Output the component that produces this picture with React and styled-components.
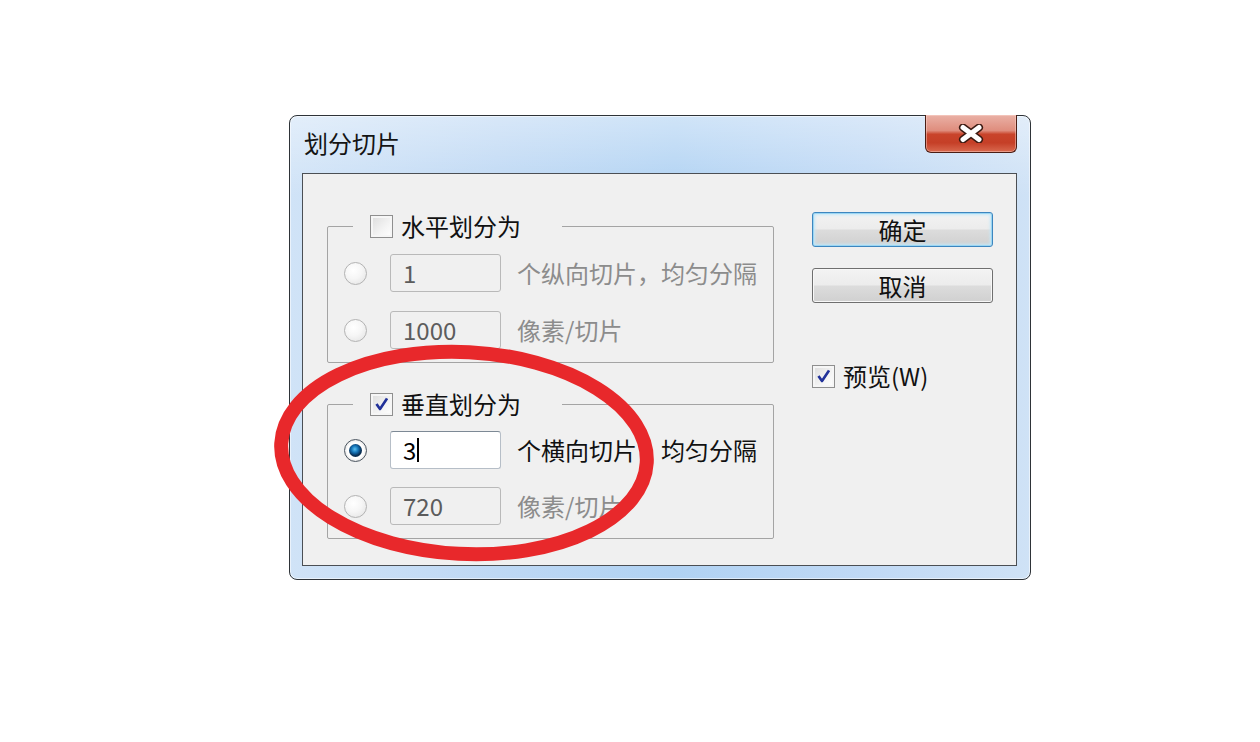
import React from "react"
import styled, { createGlobalStyle, css } from "styled-components"

const GlobalStyle = createGlobalStyle`
  html, body {
    margin: 0;
    padding: 0;
    background: #ffffff;
  }
  body {
    font-family: "Noto Sans CJK SC", "Noto Sans", sans-serif;
  }
`

const Page = styled.div`
  width: 1260px;
  height: 742px;
  padding: 115px 0 0 289px;
  box-sizing: border-box;
  overflow: hidden;
`

const Window = styled.div`
  position: relative;
  width: 742px;
  height: 465px;
  box-sizing: border-box;
  display: flex;
  flex-direction: column;
  border: 1px solid #2e3338;
  border-radius: 8px;
  background:
    linear-gradient(180deg, rgba(255, 255, 255, 0.4) 0px, rgba(255, 255, 255, 0.1) 57px, rgba(255, 255, 255, 0) 80px),
    linear-gradient(90deg, #d0e3f7 0%, #bed8f4 28%, #b0d2f3 52%, #c0d9f5 78%, #cfe2f6 100%);
  box-shadow: inset 0 0 0 1px rgba(255, 255, 255, 0.55);
`

const TitleBar = styled.div`
  height: 57px;
  flex: none;
  display: flex;
  align-items: center;
  padding-left: 14px;
`

const Title = styled.div`
  font-size: 24px;
  line-height: 30px;
  color: #141414;
  margin-bottom: 4px;
`

const CloseButton = styled.div`
  align-self: flex-start;
  margin: -1px 13px 0 auto;
  width: 92px;
  height: 38px;
  box-sizing: border-box;
  display: flex;
  align-items: center;
  justify-content: center;
  border: 1px solid #4a1d14;
  border-top: none;
  border-radius: 0 0 6px 6px;
  background: linear-gradient(
    180deg,
    #eab1a6 0%,
    #df8d7d 42%,
    #c9442b 52%,
    #c53f27 75%,
    #d9694f 100%
  );
  box-shadow: inset 0 0 0 1px rgba(255, 220, 210, 0.45);
`

const Panel = styled.div`
  margin: 0 13px 13px 12px;
  width: 715px;
  height: 393px;
  box-sizing: border-box;
  display: flex;
  align-items: flex-start;
  padding: 39px 0 0 24px;
  border: 1px solid #4b4f54;
  background: #f0f0f0;
`

const LeftColumn = styled.div`
  display: flex;
  flex-direction: column;
  gap: 28px;
`

const GroupBox = styled.fieldset`
  margin: 0;
  width: 447px;
  box-sizing: border-box;
  border: 1px solid #a4a4a4;
  border-radius: 2px;
  padding: ${p => p.$top}px 0 13px 16px;
  min-width: 0;
  display: flex;
  flex-direction: column;
  gap: ${p => p.$gap}px;
`

const GroupLegend = styled.legend`
  margin-left: 9px;
  padding: 0 41px 0 17px;
  height: 26px;
  display: flex;
  align-items: center;
  gap: 8px;
`

const CheckBox = styled.span`
  width: 23px;
  height: 23px;
  box-sizing: border-box;
  flex: none;
  display: inline-flex;
  align-items: center;
  justify-content: center;
  border: 1px solid #8f8f8f;
  background: linear-gradient(135deg, #dcdcdc 0%, #f4f4f4 60%, #ffffff 100%);
  box-shadow: inset 0 0 0 2px #f6f6f6;
`

const CheckText = styled.span`
  font-size: 24px;
  line-height: 26px;
  color: #111;
  white-space: nowrap;
`

const OptionRow = styled.div`
  height: 38px;
  display: flex;
  align-items: center;
`

const Radio = styled.span`
  position: relative;
  width: 23px;
  height: 23px;
  box-sizing: border-box;
  flex: none;
  border-radius: 50%;
  margin-right: 23px;
  ${p => p.$selected
    ? css`
      border: 1px solid #4c5660;
      background: radial-gradient(circle at 50% 50%, #ffffff 0, #ffffff 8px, #e4e4e4 11px);
      &::after {
        content: "";
        position: absolute;
        left: 4px;
        top: 4px;
        width: 13px;
        height: 13px;
        border-radius: 50%;
        background: radial-gradient(circle at 45% 40%, #5fc2f0 0, #1a7cbf 3px, #0c4f86 5px, #0a2f52 6.5px);
      }
    `
    : css`
      border: 1px solid #b3b3b3;
      background: radial-gradient(circle at 40% 35%, #ffffff 0, #f6f6f6 45%, #e0e0e0 100%);
    `}
`

const Field = styled.div`
  width: 111px;
  height: 38px;
  box-sizing: border-box;
  flex: none;
  display: flex;
  align-items: center;
  padding-left: 12px;
  border-radius: 3px;
  font-size: 24px;
  line-height: 30px;
  ${p => p.$active
    ? css`
      background: #ffffff;
      border: 1px solid #b6bec7;
      border-top-color: #7d8995;
      color: #000;
    `
    : css`
      background: #f0f0f0;
      border: 1px solid #b9b9b9;
      color: #5c5c5c;
    `}
`

const Caret = styled.span`
  width: 2px;
  height: 24px;
  margin-left: 1px;
  background: #000;
`

const OptionLabel = styled.span`
  margin-left: 16px;
  font-size: 24px;
  line-height: 30px;
  white-space: nowrap;
  color: ${p => p.$disabled ? "#8c8c8c" : "#111"};
`

const RightColumn = styled.div`
  margin: -1px 0 0 38px;
  display: flex;
  flex-direction: column;
  gap: 21px;
`

const DialogButton = styled.div`
  width: 181px;
  height: 35px;
  box-sizing: border-box;
  display: flex;
  align-items: center;
  justify-content: center;
  border-radius: 3px;
  font-size: 24px;
  line-height: 30px;
  color: #111;
  background: linear-gradient(180deg, #f3f3f3 0%, #ececec 48%, #dcdcdc 52%, #d0d0d0 100%);
  ${p => p.$focused
    ? css`
      border: 1px solid #3d86bf;
      box-shadow: inset 0 0 0 1px #9ad6f3, inset 0 0 3px 2px #c3e7f8;
    `
    : css`
      border: 1px solid #6f6f6f;
      box-shadow: inset 0 0 0 1px #f8f8f8;
    `}
`

const PreviewRow = styled.div`
  margin-top: 39px;
  display: flex;
  align-items: center;
  gap: 8px;
`

const Mark = styled.svg`
  position: absolute;
  left: -24px;
  top: 220px;
  width: 400px;
  height: 240px;
  overflow: visible;
  pointer-events: none;
`

const CheckMark = () => (
  <svg width="17" height="17" viewBox="0 0 17 17">
    <path d="M3 8.5 L7 13.5 L14.5 2.5" fill="none" stroke="#8d97c9" strokeWidth="1.2" />
    <path d="M3.5 8 L7 13 L14 2.5" fill="none" stroke="#22329a" strokeWidth="2.6" strokeLinejoin="round" />
  </svg>
)

const CloseGlyph = () => (
  <svg width="26" height="19" viewBox="0 0 26 19">
    <path d="M5 3.5 L21 15.5 M21 3.5 L5 15.5" stroke="#3b1a12" strokeWidth="8" strokeLinecap="round" />
    <path d="M5 3.5 L21 15.5 M21 3.5 L5 15.5" stroke="#ffffff" strokeWidth="5" strokeLinecap="round" />
  </svg>
)

const Check = ({ checked }) => (
  <CheckBox>{checked && <CheckMark />}</CheckBox>
)

const Option = ({ selected, active, value, label, disabled, caret }) => (
  <OptionRow>
    <Radio $selected={selected} />
    <Field $active={active}>
      {value}
      {caret && <Caret />}
    </Field>
    <OptionLabel $disabled={disabled}>{label}</OptionLabel>
  </OptionRow>
)

const App = () => {
  return (
    <Page>
      <GlobalStyle />
      <Window>
        <TitleBar>
          <Title>划分切片</Title>
          <CloseButton>
            <CloseGlyph />
          </CloseButton>
        </TitleBar>
        <Panel>
          <LeftColumn>
            <GroupBox $top={15} $gap={19}>
              <GroupLegend>
                <Check />
                <CheckText>水平划分为</CheckText>
              </GroupLegend>
              <Option value="1" label="个纵向切片，均匀分隔" disabled />
              <Option value="1000" label="像素/切片" disabled />
            </GroupBox>
            <GroupBox $top={14} $gap={18}>
              <GroupLegend>
                <Check checked />
                <CheckText>垂直划分为</CheckText>
              </GroupLegend>
              <Option selected active caret value="3" label="个横向切片，均匀分隔" />
              <Option value="720" label="像素/切片" disabled />
            </GroupBox>
          </LeftColumn>
          <RightColumn>
            <DialogButton $focused>确定</DialogButton>
            <DialogButton>取消</DialogButton>
            <PreviewRow>
              <Check checked />
              <CheckText>预览(W)</CheckText>
            </PreviewRow>
          </RightColumn>
        </Panel>
        <Mark viewBox="0 0 400 240">
          <ellipse
            cx="198"
            cy="117"
            rx="183"
            ry="101"
            fill="none"
            stroke="#e8282b"
            strokeWidth="14"
            transform="rotate(3 198 117)"
          />
        </Mark>
      </Window>
    </Page>
  )
}

export default App
